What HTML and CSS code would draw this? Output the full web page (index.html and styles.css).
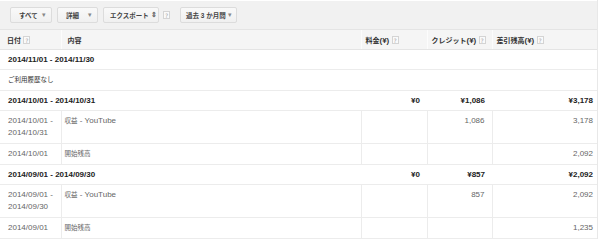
FILE: index.html
```html
<!DOCTYPE html>
<html lang="ja">
<head>
  <meta charset="UTF-8" />
  <title>取引履歴</title>
  <link rel="stylesheet" href="styles.css">
</head>
<body>
  <div class="page">
    <!-- toolbar -->
    <div class="toolbar">
      <div class="btn btn-all"><span class="ja">すべて</span><span class="caret">▾</span></div>
      <div class="btn btn-detail"><span class="ja">詳細</span><span class="caret">▾</span></div>
      <div class="btn btn-export"><span class="ja">エクスポート</span><span class="updown">⇕</span></div>
      <span class="help">?</span>
      <div class="btn btn-range"><span class="ja">過去 3 か月間</span><span class="caret">▾</span></div>
    </div>

    <table class="tx">
      <colgroup>
        <col class="c-date">
        <col class="c-desc">
        <col class="c-fee">
        <col class="c-credit">
        <col class="c-bal">
      </colgroup>
      <thead>
        <tr>
          <th><span class="ja">日付</span> <span class="help">?</span></th>
          <th><span class="ja">内容</span></th>
          <th><span class="ja">料金</span>(¥) <span class="help">?</span></th>
          <th><span class="ja">クレジット</span>(¥) <span class="help">?</span></th>
          <th><span class="ja">差引残高</span>(¥) <span class="help">?</span></th>
        </tr>
      </thead>
      <tbody>
        <tr class="period">
          <td colspan="5">2014/11/01 - 2014/11/30</td>
        </tr>
        <tr class="empty">
          <td colspan="5"><span class="ja">ご利用履歴なし</span></td>
        </tr>

        <tr class="period">
          <td colspan="2">2014/10/01 - 2014/10/31</td>
          <td class="num">¥0</td>
          <td class="num">¥1,086</td>
          <td class="num">¥3,178</td>
        </tr>
        <tr class="item">
          <td>2014/10/01 -<br>2014/10/31</td>
          <td><span class="ja">収益</span> - YouTube</td>
          <td class="num"></td>
          <td class="num">1,086</td>
          <td class="num">3,178</td>
        </tr>
        <tr class="item">
          <td>2014/10/01</td>
          <td><span class="ja">開始残高</span></td>
          <td class="num"></td>
          <td class="num"></td>
          <td class="num">2,092</td>
        </tr>

        <tr class="period">
          <td colspan="2">2014/09/01 - 2014/09/30</td>
          <td class="num">¥0</td>
          <td class="num">¥857</td>
          <td class="num">¥2,092</td>
        </tr>
        <tr class="item">
          <td>2014/09/01 -<br>2014/09/30</td>
          <td><span class="ja">収益</span> - YouTube</td>
          <td class="num"></td>
          <td class="num">857</td>
          <td class="num">2,092</td>
        </tr>
        <tr class="item">
          <td>2014/09/01</td>
          <td><span class="ja">開始残高</span></td>
          <td class="num"></td>
          <td class="num"></td>
          <td class="num">1,235</td>
        </tr>
      </tbody>
    </table>
  </div>
</body>
</html>
```

FILE: styles.css
```css
/* base */
body {
  margin: 0;
  background: #fff;
  font-family: "Liberation Sans", "Noto Sans CJK JP", sans-serif;
  font-size: 8px;
  color: #222;
}

/* Japanese text runs a little smaller than the digits */
.ja {
  font-size: 6.5px;
}
th .ja {
  font-size: 7px;
}

.page {
  width: 597px;
  border-right: 1px solid #e8e8e8;
}

/********************************************************
 * Toolbar
 ********************************************************/
.toolbar {
  height: 28px;
  border-top: 1px solid #fff;
  background: #f1f1f1;
  display: flex;
  align-items: center;
  padding-left: 10px;
}

.btn {
  box-sizing: border-box;
  height: 16px;
  padding: 0 5px 0 8px;
  margin-right: 5px;
  border: 1px solid #dcdcdc;
  border-radius: 2px;
  background: linear-gradient(#f9f9f9, #f0f0f0);
  font-weight: bold;
  color: #444;
  white-space: nowrap;
  display: flex;
  justify-content: space-between;
  align-items: center;
}
.btn-all    { width: 42px; }
.btn-detail { width: 41px; }
.btn-export { width: 56px; padding-left: 6px; padding-right: 4px; margin-right: 4px; }
.btn-range  { width: 57px; margin-left: 10px; padding-left: 5px; padding-right: 4px; }

.caret {
  font-size: 7px;
  color: #888;
  font-weight: normal;
}
.updown {
  font-size: 7px;
  color: #666;
  margin-left: 2px;
}

.help {
  display: inline-block;
  box-sizing: border-box;
  width: 7px;
  height: 8px;
  line-height: 7px;
  border: 1px solid #d4d4d4;
  background: #fafafa;
  color: #a8a8a8;
  font-family: "DejaVu Sans", sans-serif;
  font-size: 6px;
  font-weight: normal;
  text-align: center;
  vertical-align: middle;
}

/********************************************************
 * Table
 ********************************************************/
.tx {
  width: 597px;
  border-collapse: collapse;
  table-layout: fixed;
}
.c-date   { width: 61px; }
.c-desc   { width: 300px; }
.c-fee    { width: 66px; }
.c-credit { width: 65px; }
.c-bal    { width: 105px; }

.tx th {
  height: 19px;
  padding: 0 7px;
  background: #f5f5f5;
  border-top: 1px solid #e4e4e4;
  border-bottom: 1px solid #e4e4e4;
  border-left: 1px solid #fcfcfc;
  text-align: left;
  font-weight: bold;
  color: #333;
  white-space: nowrap;
}
.tx th:first-child { border-left: none; }
.tx th:nth-child(2) { padding-left: 6px; }
.tx th:nth-child(n+3) { padding-left: 4px; }

.tx td {
  height: 12px;
  padding: 4px 8px 4px 8px;
  line-height: 12px;
  border-bottom: 1px solid #ececec;
  vertical-align: top;
  white-space: nowrap;
}
.tx td.num { text-align: right; padding-right: 7px; }
.tx td.num:last-child { padding-right: 4px; }

.period td {
  font-weight: bold;
  color: #222;
  padding-bottom: 3px;
}
.empty td {
  color: #333;
}

.item td {
  color: #666;
  border-left: 1px solid #ececec;
}
.item td:first-child { border-left: none; padding-right: 2px; }
.item td:nth-child(2) { padding-left: 3px; }
```
